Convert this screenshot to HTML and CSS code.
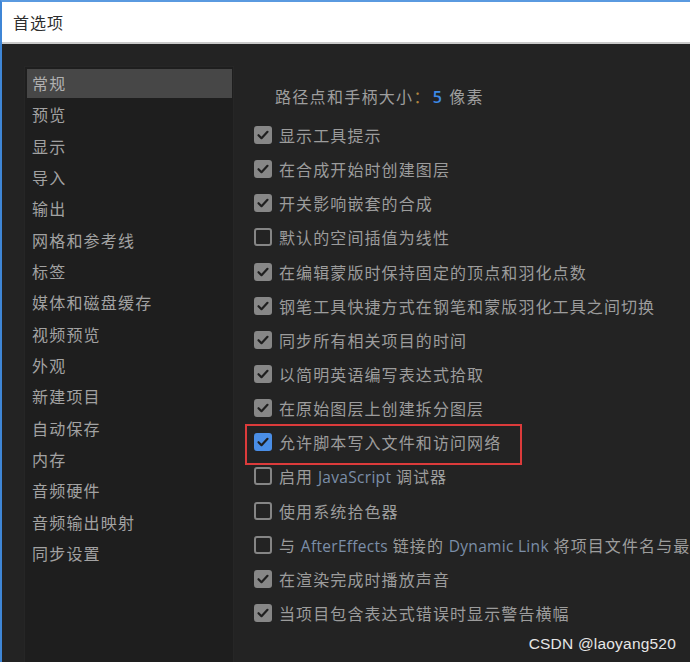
FILE: index.html
```html
<!DOCTYPE html>
<html lang="zh-CN">
<head>
<meta charset="utf-8">
<title>首选项</title>
<link rel="stylesheet" href="styles.css">
</head>
<body>
<div class="window">
  <div class="titlebar"><span class="title">首选项</span></div>
  <div class="main">
    <ul class="sidebar">
      <li class="nav selected">常规</li>
      <li class="nav">预览</li>
      <li class="nav">显示</li>
      <li class="nav">导入</li>
      <li class="nav">输出</li>
      <li class="nav">网格和参考线</li>
      <li class="nav">标签</li>
      <li class="nav">媒体和磁盘缓存</li>
      <li class="nav">视频预览</li>
      <li class="nav">外观</li>
      <li class="nav">新建项目</li>
      <li class="nav">自动保存</li>
      <li class="nav">内存</li>
      <li class="nav">音频硬件</li>
      <li class="nav">音频输出映射</li>
      <li class="nav">同步设置</li>
    </ul>
    <div class="content">
      <div class="field">路径点和手柄大小<span class="colon">：</span><span class="num">5</span><span class="unit">像素</span></div>
      <div class="row"><span class="cb on"><svg viewBox="0 0 18 18"><path d="M4.5 9.2l3 3 6-6.4"/></svg></span><span class="label">显示工具提示</span></div>
      <div class="row"><span class="cb on"><svg viewBox="0 0 18 18"><path d="M4.5 9.2l3 3 6-6.4"/></svg></span><span class="label">在合成开始时创建图层</span></div>
      <div class="row"><span class="cb on"><svg viewBox="0 0 18 18"><path d="M4.5 9.2l3 3 6-6.4"/></svg></span><span class="label">开关影响嵌套的合成</span></div>
      <div class="row"><span class="cb"></span><span class="label">默认的空间插值为线性</span></div>
      <div class="row"><span class="cb on"><svg viewBox="0 0 18 18"><path d="M4.5 9.2l3 3 6-6.4"/></svg></span><span class="label">在编辑蒙版时保持固定的顶点和羽化点数</span></div>
      <div class="row"><span class="cb on"><svg viewBox="0 0 18 18"><path d="M4.5 9.2l3 3 6-6.4"/></svg></span><span class="label">钢笔工具快捷方式在钢笔和蒙版羽化工具之间切换</span></div>
      <div class="row"><span class="cb on"><svg viewBox="0 0 18 18"><path d="M4.5 9.2l3 3 6-6.4"/></svg></span><span class="label">同步所有相关项目的时间</span></div>
      <div class="row"><span class="cb on"><svg viewBox="0 0 18 18"><path d="M4.5 9.2l3 3 6-6.4"/></svg></span><span class="label">以简明英语编写表达式拾取</span></div>
      <div class="row"><span class="cb on"><svg viewBox="0 0 18 18"><path d="M4.5 9.2l3 3 6-6.4"/></svg></span><span class="label">在原始图层上创建拆分图层</span></div>
      <div class="row marked"><span class="cb on blue"><svg viewBox="0 0 18 18"><path d="M4.5 9.2l3 3 6-6.4"/></svg></span><span class="label">允许脚本写入文件和访问网络</span></div>
      <div class="row"><span class="cb"></span><span class="label">启用 <span class="latin">JavaScript</span> 调试器</span></div>
      <div class="row"><span class="cb"></span><span class="label">使用系统拾色器</span></div>
      <div class="row"><span class="cb"></span><span class="label">与 <span class="latin">AfterEffects</span> 链接的 <span class="latin">Dynamic Link</span> 将项目文件名与最</span></div>
      <div class="row"><span class="cb on"><svg viewBox="0 0 18 18"><path d="M4.5 9.2l3 3 6-6.4"/></svg></span><span class="label">在渲染完成时播放声音</span></div>
      <div class="row"><span class="cb on"><svg viewBox="0 0 18 18"><path d="M4.5 9.2l3 3 6-6.4"/></svg></span><span class="label">当项目包含表达式错误时显示警告横幅</span></div>
    </div>
    <div class="watermark">CSDN @laoyang520</div>
  </div>
</div>
</body>
</html>
```

FILE: styles.css
```css
* { box-sizing: border-box; }
html, body { margin: 0; padding: 0; }
body {
  width: 690px;
  height: 662px;
  overflow: hidden;
  background: #232323;
  font-family: "Noto Sans CJK SC", "Noto Sans", sans-serif;
}
.window {
  width: 690px;
  height: 662px;
  border-left: 2px solid #3f86d6;
  border-top: 2px solid #5a9ae0;
  display: flex;
  flex-direction: column;
  overflow: hidden;
}
.titlebar {
  height: 42px;
  flex: none;
  background: #ffffff;
  border-bottom: 2px solid #c9c9c9;
  display: flex;
  align-items: center;
  padding-left: 11px;
}
.title {
  font-size: 16px;
  letter-spacing: 1px;
  color: #2e2e2e;
}
.main {
  flex: 1;
  position: relative;
  display: flex;
  padding-top: 22px;
  padding-left: 22px;
  background: #232323;
}
.sidebar {
  list-style: none;
  margin: 0;
  padding: 2px 1px 0 2px;
  width: 210px;
  flex: none;
  background: #1e1e1e;
  border: 1px solid #262626;
  border-bottom: none;
  display: flex;
  flex-direction: column;
  gap: 2.83px;
}
.nav {
  height: 28.5px;
  line-height: 28.5px;
  padding-left: 5px;
  font-size: 16px;
  letter-spacing: 1.2px;
  color: #a2a2a2;
  white-space: nowrap;
}
.nav.selected {
  background: #474747;
  color: #b0b0b0;
}
.content {
  flex: 1;
  min-width: 0;
  padding-left: 20px;
  padding-top: 19px;
  display: flex;
  flex-direction: column;
}
.field {
  height: 22px;
  line-height: 22px;
  padding-left: 21px;
  margin-bottom: 11px;
  font-size: 16px;
  letter-spacing: 1.3px;
  color: #9e9e9e;
  white-space: nowrap;
}
.colon { color: #b0843e; }
.num {
  color: #3d8ae6;
  font-family: "Open Sans", sans-serif;
  font-weight: 600;
  margin: 0 6px 0 2px;
}
.row {
  height: 34.15px;
  display: flex;
  align-items: center;
  gap: 7px;
  white-space: nowrap;
  position: relative;
}
.cb {
  flex: none;
  width: 18px;
  height: 18px;
  border-radius: 3px;
  border: 2px solid #858585;
  display: flex;
  align-items: center;
  justify-content: center;
}
.cb.on {
  background: #878787;
  border: none;
}
.cb.blue {
  background: #4a8ee6;
}
.cb svg {
  width: 18px;
  height: 18px;
  fill: none;
  stroke: #1f1f1f;
  stroke-width: 2.2;
  stroke-linecap: round;
  stroke-linejoin: round;
}
.label {
  font-size: 16px;
  letter-spacing: 1.1px;
  color: #9c9c9c;
}
.latin {
  font-family: "Open Sans", sans-serif;
  font-size: 15.5px;
  letter-spacing: 0.3px;
  color: #7b8ea8;
}
.marked::after {
  content: "";
  position: absolute;
  left: -9px;
  top: -1px;
  width: 273px;
  height: 37px;
  border: 2px solid #dc3b3b;
}
.watermark {
  position: absolute;
  right: 14px;
  bottom: 9px;
  font-family: "Liberation Sans", "Noto Sans", sans-serif;
  font-size: 15.5px;
  color: #e6e6e6;
  letter-spacing: 0.2px;
}
```
